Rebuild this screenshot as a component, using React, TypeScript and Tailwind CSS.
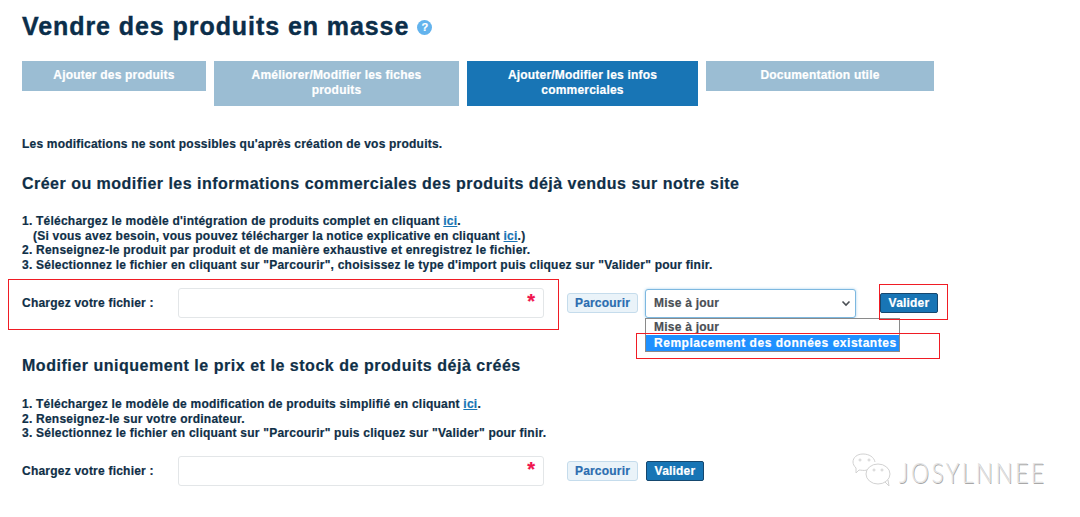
import React from "react";

const Ici = () => <span className="text-[#1874b4] underline">ici</span>;

function Upload({ children }: { children?: React.ReactNode }) {
  return (
    <div className="flex items-center">
      <div className="w-[156px] text-[12px] font-bold tracking-[0.22px] text-[#0f2f47]">Chargez votre fichier :</div>
      <div className="relative h-[30px] w-[366px] rounded-[3px] border border-[#e3e6e8] bg-white">
        <span className="absolute right-[8px] top-[2px] text-[20px] font-bold leading-[20px] text-[#f0134d]">*</span>
      </div>
      {children}
    </div>
  );
}

function Parcourir() {
  return (
    <div className="ml-[23px] flex h-[20px] w-[71px] items-center justify-center rounded-[3px] border border-[#c5dcec] bg-[#eaf3f9] text-[12px] font-bold tracking-[0.2px] text-[#2a6db0]">
      Parcourir
    </div>
  );
}

function Valider({ className = "" }: { className?: string }) {
  return (
    <div className={`flex h-[20px] w-[58px] items-center justify-center rounded-[2px] border border-[#15476e] bg-[#1875b5] text-[12px] font-bold tracking-[0.2px] text-white ${className}`}>
      Valider
    </div>
  );
}

const Tab = ({ w, h, active, children }: { w: string; h: string; active?: boolean; children: React.ReactNode }) => (
  <div className={`${w} ${h} ${active ? "bg-[#1875b5]" : "bg-[#9bbdd3]"} pt-[7px] text-center text-[12px] font-bold leading-[15px] tracking-[0.2px] text-white`}>
    {children}
  </div>
);

export default function App() {
  return (
    <div className="relative h-[517px] w-[1080px] overflow-hidden bg-white pl-[22px] pt-[12px] font-['Liberation_Sans',Arial,sans-serif] text-[#0f2f47] [-webkit-text-stroke:0.2px_currentColor]">
      <div className="flex items-center">
        <h1 className="text-[25px] font-bold leading-[28px] tracking-[0.93px] text-[#0b2e4a] [-webkit-text-stroke:0.4px_currentColor]">Vendre des produits en masse</h1>
        <span className="ml-[8px] mt-[2px] flex h-[15px] w-[15px] items-center justify-center rounded-full bg-[#63b3ed] text-[11px] font-bold text-white">?</span>
      </div>

      <div className="mt-[21px] flex items-start gap-[8px]">
        <Tab w="w-[184px]" h="h-[30px]">Ajouter des produits</Tab>
        <Tab w="w-[245px]" h="h-[45px]"><div className="mx-auto w-[200px]">Améliorer/Modifier les fiches produits</div></Tab>
        <Tab w="w-[231px]" h="h-[45px]" active><div className="mx-auto w-[200px]">Ajouter/Modifier les infos commerciales</div></Tab>
        <Tab w="w-[228px]" h="h-[30px]">Documentation utile</Tab>
      </div>

      <p className="mt-[31px] text-[12px] font-bold leading-[14px] tracking-[0.21px]">Les modifications ne sont possibles qu'après création de vos produits.</p>

      <h2 className="mt-[24px] text-[16px] font-bold leading-[17px] tracking-[0.48px]">Créer ou modifier les informations commerciales des produits déjà vendus sur notre site</h2>

      <div className="mt-[22px] text-[12px] font-bold leading-[14.5px] tracking-[0.23px]">
        <div>1. Téléchargez le modèle d'intégration de produits complet en cliquant <Ici />.</div>
        <div className="pl-[11px]">(Si vous avez besoin, vous pouvez télécharger la notice explicative en cliquant <Ici />.)</div>
        <div>2. Renseignez-le produit par produit et de manière exhaustive et enregistrez le fichier.</div>
        <div>3. Sélectionnez le fichier en cliquant sur "Parcourir", choisissez le type d'import puis cliquez sur "Valider" pour finir.</div>
      </div>

      <div className="mt-[16px]">
        <Upload>
          <Parcourir />
          <div className="ml-[7px] flex h-[29px] w-[211px] items-center justify-between rounded-[3px] border border-[#7db8e0] bg-white pl-[8px] pr-[4px] text-[12px] font-bold tracking-[0.23px] text-[#4a4f54] shadow-[0_0_3px_#a8d2ee]">
            Mise à jour
            <svg width="10" height="10" viewBox="0 0 10 10" fill="none" stroke="#4a4f54" strokeWidth="1.6"><path d="M1.5 3.5 5 7l3.5-3.5" /></svg>
          </div>
          <Valider className="ml-[24px]" />
        </Upload>
      </div>

      <h2 className="mt-[39px] text-[16px] font-bold leading-[17px] tracking-[0.53px]">Modifier uniquement le prix et le stock de produits déjà créés</h2>

      <div className="mt-[23px] text-[12px] font-bold leading-[14.5px] tracking-[0.23px]">
        <div>1. Téléchargez le modèle de modification de produits simplifié en cliquant <Ici />.</div>
        <div>2. Renseignez-le sur votre ordinateur.</div>
        <div>3. Sélectionnez le fichier en cliquant sur "Parcourir" puis cliquez sur "Valider" pour finir.</div>
      </div>

      <div className="mt-[15px]">
        <Upload>
          <Parcourir />
          <Valider className="ml-[8px]" />
        </Upload>
      </div>

      {/* open select list */}
      <div className="absolute left-[645px] top-[318px] w-[255px] border border-[#8a8a8a] bg-white text-[12px] font-bold leading-[16px] tracking-[0.23px] text-[#4a4f54]">
        <div className="pl-[8px]">Mise à jour</div>
        <div className="bg-[#1e90ff] pl-[8px] tracking-[0.53px] text-white">Remplacement des données existantes</div>
      </div>

      {/* red annotation frames */}
      <div className="absolute left-[8px] top-[279px] h-[51px] w-[551px] border border-[#f01c24]" />
      <div className="absolute left-[879px] top-[284px] h-[36px] w-[69px] border border-[#f01c24]" />
      <div className="absolute left-[636px] top-[333px] h-[26px] w-[304px] border border-[#f01c24]" />

      {/* watermark */}
      <div className="absolute left-[852px] top-[453px] flex items-center [-webkit-text-stroke:0]">
        <svg width="40" height="34" viewBox="0 0 40 34" fill="none" stroke="#d2d2d2" strokeWidth="1">
          <path d="M15 17c-3 1-6 0-8 0l-3 3 0-5C2 13 1 11 1 9c0-4.500 4-8 10-8 6 0 11 3 12 8" />
          <ellipse cx="26" cy="21" rx="12" ry="10" />
          <path d="M33 29l4 4-1-6" />
          <circle cx="8" cy="7" r="1" />
          <circle cx="17" cy="7" r="1" />
          <circle cx="22" cy="17" r="1" />
          <circle cx="30" cy="17" r="1" />
        </svg>
        <span className="ml-[7px] mt-[5px] origin-left scale-x-[0.84] font-['Lato',sans-serif] text-[27px] font-light leading-[28px] tracking-[3px] text-[#e4e4e4] [text-shadow:1px_1px_0_#a8a8a8]">JOSYLNNEE</span>
      </div>
    </div>
  );
}
